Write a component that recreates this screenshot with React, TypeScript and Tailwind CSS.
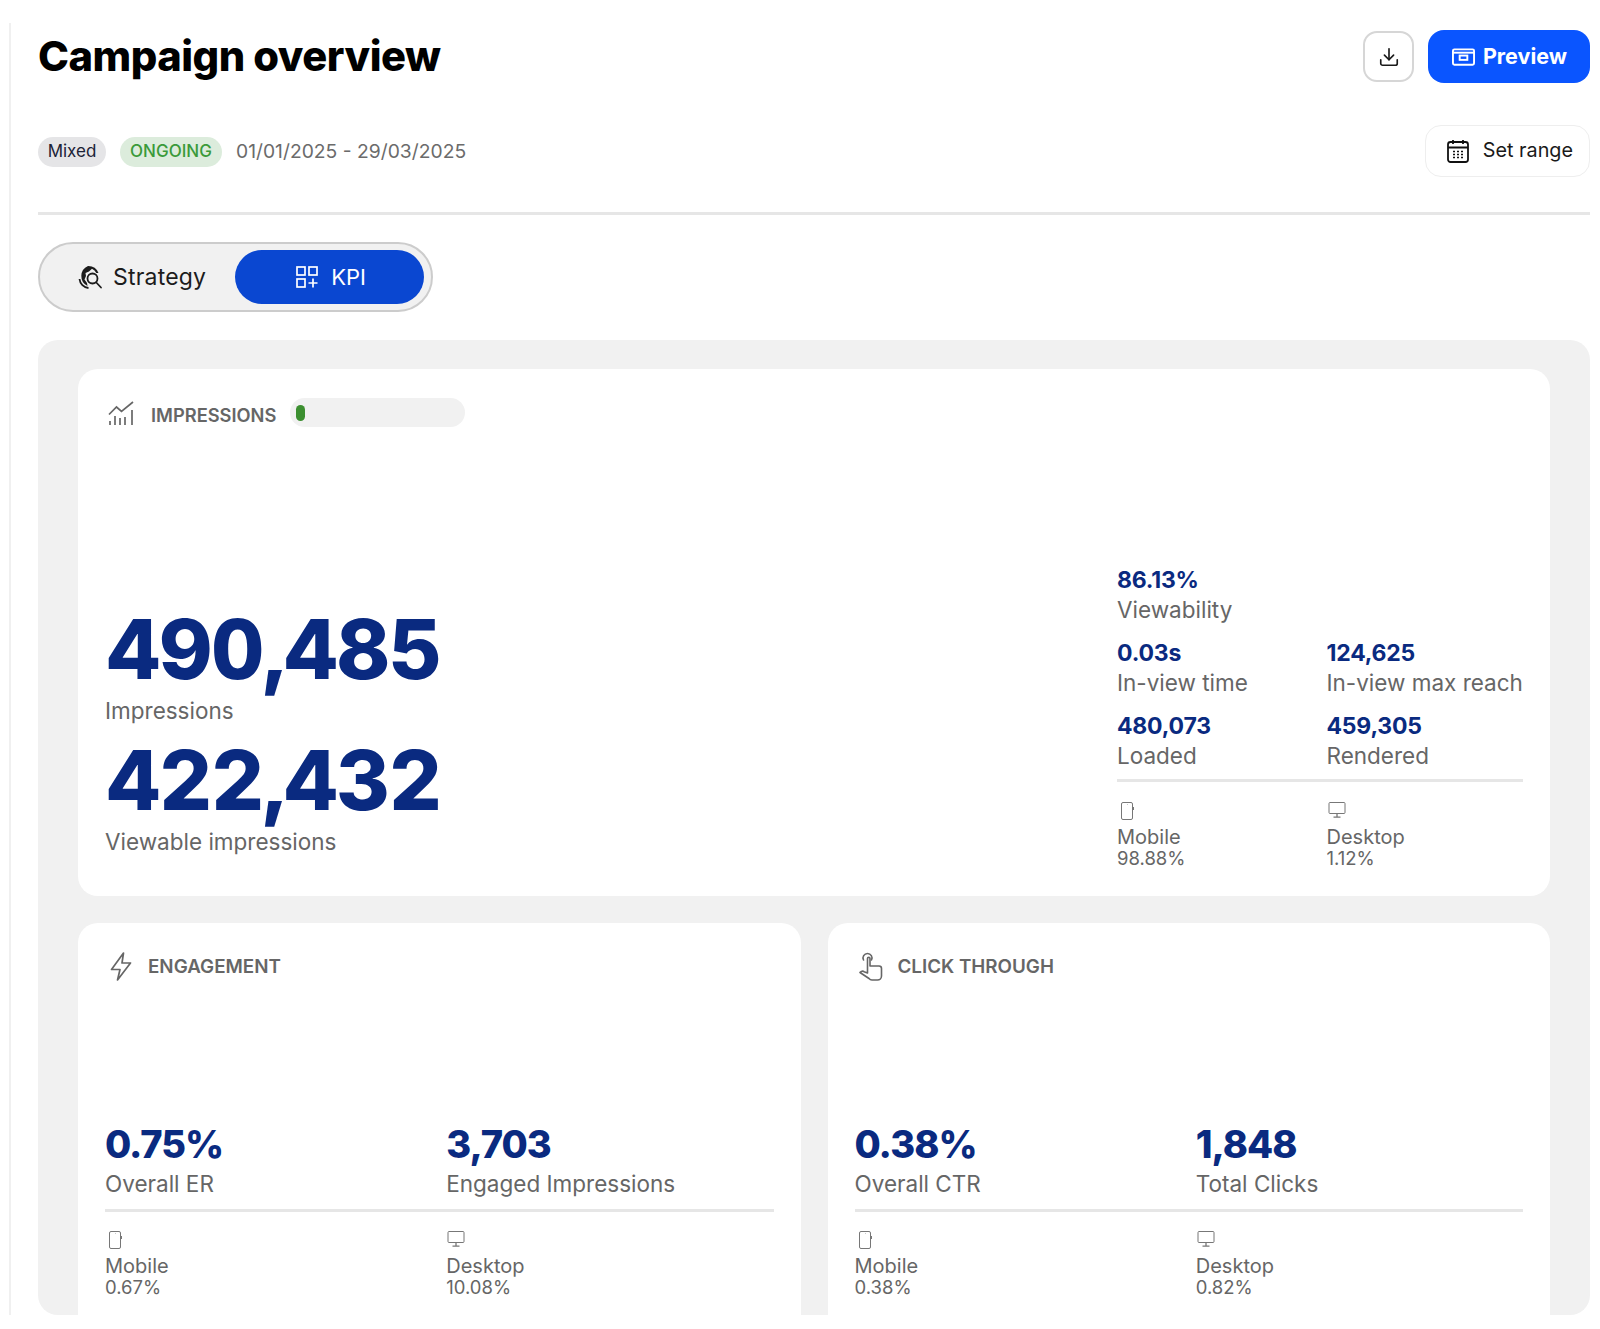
import type { ReactNode } from 'react';
import { Download } from 'lucide-react';

function PreviewIcon() {
  return (
    <svg width="23" height="20" viewBox="0 0 24 20" fill="none" stroke="currentColor" strokeWidth="2">
      <rect x="1" y="2" width="22" height="16" rx="1.5" />
      <path d="M1 5.5h22" />
      <rect x="8" y="8.5" width="8" height="4.5" />
    </svg>
  );
}

function CalendarIcon() {
  return (
    <svg width="22" height="24" viewBox="0 0 22 24" fill="none" stroke="#111" strokeWidth="1.8">
      <rect x="1" y="3" width="20" height="20" rx="2.5" />
      <path d="M1 8.5h20M6 1v4M16 1v4" />
      <path d="M6 12.500h2M10 12.500h2M14 12.500h2M6 15.500h2M10 15.500h2M14 15.500h2M6 18.500h2M10 18.500h2M14 18.500h2" strokeWidth="1.6" />
    </svg>
  );
}

function StrategyIcon() {
  return (
    <svg width="26" height="25" viewBox="0 0 26 25" fill="none">
      <path d="M11 1a11 11 0 0 1 10.500 7h-2.200a9 9 0 0 0-4.300-4.200l-3 2.700-3.500 1.500.5 3-1.500 3.500 2.500 3.500.5 3A11 11 0 0 1 11 1Z" fill="#1c1c1c" />
      <path d="M2.500 14a10 10 0 0 0 9 9" stroke="#1c1c1c" strokeWidth="1.800" />
      <circle cx="15.500" cy="13.500" r="5" stroke="#1c1c1c" strokeWidth="1.800" />
      <path d="m19.300 17.500 4.700 5" stroke="#1c1c1c" strokeWidth="1.800" strokeLinecap="round" />
    </svg>
  );
}

function KpiIcon() {
  return (
    <svg width="22" height="22" viewBox="0 0 22 22" fill="none" stroke="white" strokeWidth="1.7">
      <rect x="1" y="1" width="8" height="8" />
      <rect x="13" y="1" width="8" height="8" />
      <rect x="1" y="13" width="8" height="8" />
      <path d="M17 12.500v9M12.500 17h9" />
    </svg>
  );
}

function ChartIcon() {
  return (
    <svg width="26" height="24" viewBox="0 0 26 24" fill="none" stroke="#666" strokeWidth="1.700">
      <path d="M1 13.500 8.500 6l5 4.500L25 1" />
      <path d="M2 24v-4M7 24v-9M12 24v-7M17 24v-8M24 24V9" />
    </svg>
  );
}

function BoltIcon() {
  return (
    <svg width="22" height="29" viewBox="0 0 22 29" fill="none" stroke="#666" strokeWidth="1.700" strokeLinejoin="round">
      <path d="M13.500 1 1.500 17.500H10L7.500 28 20.500 11h-8.500Z" />
    </svg>
  );
}

function TouchIcon() {
  return (
    <svg width="24" height="29" viewBox="0 0 24 29" fill="none" stroke="#666" strokeWidth="1.600" strokeLinecap="round" strokeLinejoin="round">
      <path d="M4.500 8a4.500 4.500 0 1 1 8 0" />
      <path d="M8.500 21V6.500a1.200 1.200 0 0 1 2.500 0V14h9a2.500 2.500 0 0 1 2.500 2.500V24a4 4 0 0 1-4 4H13a4 4 0 0 1-3-1.500L1 20.500l1.500-1a2 2 0 0 1 2.500.2Z" />
    </svg>
  );
}

function MobileIcon() {
  return (
    <svg width="14" height="18" viewBox="0 0 14 18" fill="none" stroke="#777" strokeWidth="1">
      <rect x="1.500" y="0.500" width="11" height="17" rx="1.500" />
      <path d="M13.500 5v3M7 2.500h.4" />
    </svg>
  );
}

function DesktopIcon() {
  return (
    <svg width="18" height="16" viewBox="0 0 18 16" fill="none" stroke="#777" strokeWidth="1">
      <rect x="1" y="0.500" width="16" height="11" rx="1" />
      <path d="M9 11.500V15M5.500 15.200h7" strokeWidth="1.300" />
    </svg>
  );
}

function DeviceSplit({ mobile, desktop, gapClass }: { mobile: string; desktop: string; gapClass: string }) {
  return (
    <div className={`grid grid-cols-2 ${gapClass} leading-[21px] text-[#666]`}>
      <div>
        <div className="h-[25px] pl-[3px]">
          <MobileIcon />
        </div>
        <p className="text-[20px]">Mobile</p>
        <p className="text-[18.5px]">{mobile}</p>
      </div>
      <div>
        <div className="h-[25px] pl-[1px]">
          <DesktopIcon />
        </div>
        <p className="text-[20px]">Desktop</p>
        <p className="text-[18.5px]">{desktop}</p>
      </div>
    </div>
  );
}

function Stat({ value, label }: { value: string; label: string }) {
  return (
    <div>
      <p className="pt-[1px] text-[23px] leading-[29px] font-bold tracking-[-0.2px] text-[#0a2a80]">{value}</p>
      <p className="text-[22.5px] leading-[30px] text-[#666]">{label}</p>
    </div>
  );
}

function BigStat({ value, label }: { value: string; label: string }) {
  return (
    <div>
      <p className="pt-[2px] pl-[2px] text-[82px] leading-[90px] font-extrabold tabular-nums tracking-[-0.8px] text-[#0a2a80]">{value}</p>
      <p className="mt-[2px] text-[22.5px] leading-[28px] text-[#666]">{label}</p>
    </div>
  );
}

function SmallCard({
  icon,
  title,
  stats,
  mobile,
  desktop,
}: {
  icon: ReactNode;
  title: string;
  stats: [string, string][];
  mobile: string;
  desktop: string;
}) {
  return (
    <div className="bg-white rounded-t-[20px] pt-[30px] px-[27px]">
      <div className="h-[27px] flex items-center gap-[15px] text-[18.8px] font-semibold text-[#666] pl-[4px]">
        <span className="w-[24px] flex justify-center">{icon}</span>
        <span className="pt-[2px]">{title}</span>
      </div>
      <div className="mt-[140px] grid grid-cols-2 gap-x-[14px]">
        {stats.map(([value, label]) => (
          <div key={label}>
            <p className="text-[38px] leading-[48px] font-extrabold tracking-[-1px] text-[#0a2a80]">{value}</p>
            <p className="mt-[4px] text-[22.5px] leading-[24px] text-[#666]">{label}</p>
          </div>
        ))}
      </div>
      <div className="mt-[13px] h-[3px] bg-[#e6e6e6]" />
      <div className="mt-[19px]">
        <DeviceSplit mobile={mobile} desktop={desktop} gapClass="gap-x-[14px]" />
      </div>
    </div>
  );
}

export default function App() {
  return (
    <div className="font-['Inter',sans-serif] bg-white h-[1329px] pt-[23px] pr-[10px]">
      <div className="ml-[9px] border-l-2 border-[#f0f0f0] pl-[27px] pt-[7px] h-[1292px]">
        <div className="flex items-center justify-between h-[53px]">
          <h1 className="text-[41.7px] font-extrabold tracking-[-0.5px] text-black">Campaign overview</h1>
          <div className="flex items-center gap-[14px]">
            <button className="w-[51px] h-[51px] rounded-[14px] border-2 border-[#d6d6d6] flex items-center justify-center text-[#1a1a1a]">
              <Download className="w-[22px] h-[22px]" strokeWidth={1.8} />
            </button>
            <button className="w-[162px] h-[53px] rounded-[16px] bg-[#0a55ff] text-white flex items-center justify-end pr-[23px] gap-[8px] text-[21.5px] font-bold">
              <PreviewIcon />
              Preview
            </button>
          </div>
        </div>

        <div className="mt-[42px] flex items-center justify-between h-[52px]">
          <div className="mt-[1px] flex items-center gap-[14px]">
            <span className="h-[30px] w-[68px] rounded-full bg-[#e5e5e7] text-[#1b2236] text-[17px] flex items-center justify-center">Mixed</span>
            <span className="h-[30px] w-[102px] rounded-full bg-[#dcecdc] text-[#3a9a3a] text-[17px] font-medium flex items-center justify-center">ONGOING</span>
            <span className="text-[19.3px] text-[#6b6b6b]">01/01/2025 - 29/03/2025</span>
          </div>
          <button className="w-[165px] h-[52px] rounded-[16px] border border-[#eeeeee] flex items-center justify-end pr-[16px] gap-[14px] text-[19.8px] text-[#1a1a1a]">
            <CalendarIcon />
            Set range
          </button>
        </div>

        <div className="mt-[35px] h-[3px] bg-[#e6e6e6]" />

        <div className="mt-[27px] w-[395px] h-[70px] rounded-full border-2 border-[#cccccc] bg-[#f1f1f1] flex items-center pl-[37px] pr-[6px]">
          <div className="flex items-center gap-[10px] text-[23px] tracking-[0.2px] text-[#1c1c1c] w-[158px]">
            <StrategyIcon />
            Strategy
          </div>
          <div className="w-[189px] h-[54px] rounded-full bg-[#0a47d1] text-white flex items-center justify-end pr-[58px] gap-[13px] text-[22px]">
            <KpiIcon />
            KPI
          </div>
        </div>

        <div className="mt-[28px] h-[975px] rounded-[20px] bg-[#f1f1f1] pt-[29px] px-[40px] overflow-hidden">
          <div className="bg-white rounded-[20px] h-[527px] pt-[29px] px-[27px] pb-[27px] flex flex-col justify-between">
            <div className="h-[29px] flex items-center text-[18.3px] font-semibold text-[#666] pl-[3px]">
              <ChartIcon />
              <span className="ml-[17px] mt-[6px]">IMPRESSIONS</span>
              <div className="ml-[14px] w-[175px] h-[29px] rounded-full bg-[#f1f1f1] pl-[6px] flex items-center">
                <div className="w-[9px] h-[16px] rounded-full bg-[#3c8f30]" />
              </div>
            </div>
            <div className="flex items-end justify-between">
              <div className="mb-[13px] flex flex-col gap-[9px]">
                <BigStat value="490,485" label="Impressions" />
                <BigStat value="422,432" label="Viewable impressions" />
              </div>
              <div className="w-[406px]">
                <div className="grid grid-cols-2 gap-x-[13px] gap-y-[13px]">
                  <div className="col-span-2">
                    <Stat value="86.13%" label="Viewability" />
                  </div>
                  <Stat value="0.03s" label="In-view time" />
                  <Stat value="124,625" label="In-view max reach" />
                  <Stat value="480,073" label="Loaded" />
                  <Stat value="459,305" label="Rendered" />
                </div>
                <div className="mt-[8px] h-[3px] bg-[#e6e6e6]" />
                <div className="mt-[20px]">
                  <DeviceSplit mobile="98.88%" desktop="1.12%" gapClass="gap-x-[13px]" />
                </div>
              </div>
            </div>
          </div>

          <div className="mt-[27px] grid grid-cols-2 gap-x-[27px] h-[392px]">
            <SmallCard
              icon={<BoltIcon />}
              title="ENGAGEMENT"
              stats={[['0.75%', 'Overall ER'], ['3,703', 'Engaged Impressions']]}
              mobile="0.67%"
              desktop="10.08%"
            />
            <SmallCard
              icon={<TouchIcon />}
              title="CLICK THROUGH"
              stats={[['0.38%', 'Overall CTR'], ['1,848', 'Total Clicks']]}
              mobile="0.38%"
              desktop="0.82%"
            />
          </div>
        </div>
      </div>
    </div>
  );
}
